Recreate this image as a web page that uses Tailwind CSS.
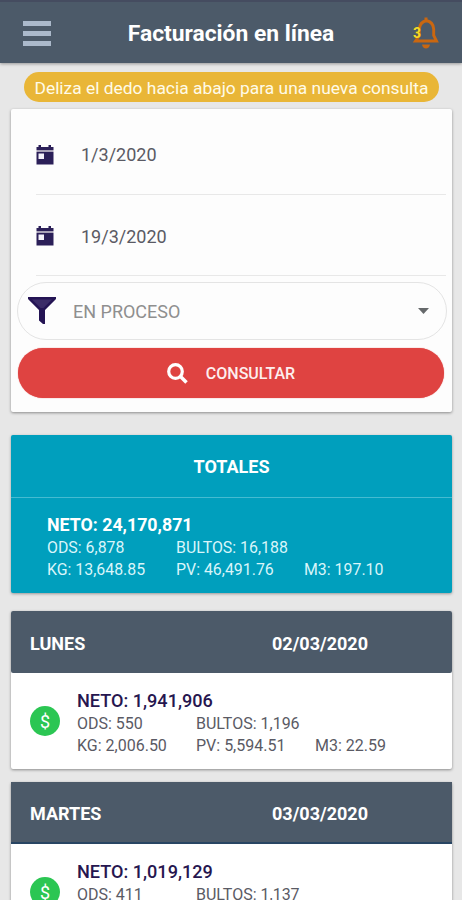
<!DOCTYPE html>
<html lang="es">
<head>
    <meta charset="UTF-8">
    <meta name="viewport" content="width=device-width, initial-scale=1.0">
    <title>Facturación en línea</title>
    <script src="https://cdn.jsdelivr.net/npm/@tailwindcss/browser@4"></script>
</head>
<body class="bg-[#e7e7e7] h-[900px] overflow-hidden font-[Roboto,sans-serif] text-[#5a5a64]">
    <!-- Top bar -->
    <header class="relative h-[63px] bg-[#4c5a69] border-t-2 border-[#454c60] shadow-[0_1px_3px_rgba(0,0,0,0.35)] flex items-center justify-center">
        <button class="absolute left-[23px] top-[19px] flex flex-col gap-[5px]" aria-label="Menú">
            <span class="block w-[28px] h-[5px] bg-[#abb9cb]"></span>
            <span class="block w-[28px] h-[5px] bg-[#abb9cb]"></span>
            <span class="block w-[28px] h-[5px] bg-[#abb9cb]"></span>
        </button>
        <h1 class="text-[22.8px] font-bold text-white pt-[3px]">Facturación en línea</h1>
        <div class="absolute left-[411px] top-[14px]">
            <svg class="block w-[30px] h-[34px]" viewBox="0 0 30 34" fill="none">
                <path d="M4.500 25H25.500L22.700 19.500V13C22.300 8.300 20 5.500 15.500 4.800C11 5.500 8.700 8.300 8.300 13V19.500z" stroke="#ca6710" stroke-width="2.900"/>
                <path d="M13.500 1.500h3v3.500h-3zM11 28.500h8c-.4 2.500-2 4-4 4s-3.600-1.500-4-4z" fill="#ca6710"/>
            </svg>
            <span class="absolute left-[2px] top-[8px] text-[14px] leading-[18px] font-bold text-[#f2dc27]">3</span>
        </div>
    </header>

    <main class="px-[11px] pt-[9px]">
        <p class="h-[30px] ml-[13px] w-[415px] rounded-full bg-[#e9b637] text-[#fffbe8] text-[17.4px] leading-[33px] text-center whitespace-nowrap">Deliza el dedo hacia abajo para una nueva consulta</p>

        <!-- Query form -->
        <section class="mt-[7px] h-[303px] w-[441px] bg-[#fdfdfd] rounded-[2px] shadow-[0_1px_3px_rgba(0,0,0,0.4)] px-[6px]">
            <div class="ml-[19px] h-[86px] border-b border-[#e8e8e8] flex items-center pt-[6px]">
                <svg class="w-[18px] h-[20px]" viewBox="0 0 18 20">
                    <path d="M2.500 0h2.500v2h7.500V0H15v2h2.500v3H.5V2h2z" fill="#2b1f58"/>
                    <path d="M.5 5h17v2H.5z" fill="#a9a2b8"/>
                    <path d="M.5 7h17v12.500H.5z" fill="#2b1f58"/>
                    <path d="M2.500 8.500h5.500v5.500H2.500z" fill="#f4f2fa"/>
                </svg>
                <span class="ml-[27px] text-[18px]">1/3/2020</span>
            </div>
            <div class="ml-[19px] h-[81px] border-b border-[#e8e8e8] flex items-center pt-[2px]">
                <svg class="w-[18px] h-[20px]" viewBox="0 0 18 20">
                    <path d="M2.500 0h2.500v2h7.500V0H15v2h2.500v3H.5V2h2z" fill="#2b1f58"/>
                    <path d="M.5 5h17v2H.5z" fill="#a9a2b8"/>
                    <path d="M.5 7h17v12.500H.5z" fill="#2b1f58"/>
                    <path d="M2.500 8.500h5.500v5.500H2.500z" fill="#f4f2fa"/>
                </svg>
                <span class="ml-[27px] text-[18px]">19/3/2020</span>
            </div>
            <div class="mt-[6px] h-[58px] w-[430px] rounded-full border border-[#e4e4e4] flex items-center pl-[10px] pr-[17px]">
                <svg class="w-[28px] h-[28px]" viewBox="0 0 28 28">
                    <path d="M0 0h28v2L17 13v14h-2l-4-3.500V13L0 2z" fill="#241454"/>
                    <path d="M4 2.500h20l-8.500 8.500h-3z" fill="#3b2c68"/>
                </svg>
                <span class="ml-[17px] flex-1 text-[18px] text-[#8f8f8f]">EN PROCESO</span>
                <svg class="w-[11px] h-[6px]" viewBox="0 0 11 6"><path d="M0 0h11L5.500 6z" fill="#66696b"/></svg>
            </div>
            <button class="mt-[8px] ml-px h-[50px] w-[426px] rounded-full bg-[#df4341] shadow-[0_0_1px_#df4341] text-[#fdeeee] flex items-center justify-center">
                <svg class="w-[21px] h-[21px]" viewBox="0 0 21 21" fill="none" stroke="#fff">
                    <circle cx="8.500" cy="8.500" r="6.800" stroke-width="3.200"/>
                    <path d="M13.500 13.500l6 6" stroke-width="3.600"/>
                </svg>
                <span class="ml-[18px] pt-[2px] text-[16px] font-medium">CONSULTAR</span>
            </button>
        </section>

        <!-- Totals -->
        <section class="mt-[23px] h-[158px] w-[441px] bg-[#009fbd] text-[#d9f5fa] rounded-[2px] shadow-[0_1px_3px_rgba(0,0,0,0.35)]">
            <h2 class="h-[63px] border-b border-[#45bbd1] flex items-center justify-center pt-px text-[18px] font-bold text-white">TOTALES</h2>
            <div class="pl-[36px] pt-[15px] text-[15.9px] leading-[22px] whitespace-nowrap">
                <p class="text-[17.8px] leading-[24px] font-bold text-white">NETO: 24,170,871</p>
                <div class="grid grid-cols-[129px_128px_1fr]">
                    <span>ODS: 6,878</span><span class="col-span-2">BULTOS: 16,188</span>
                    <span>KG: 13,648.85</span><span>PV: 46,491.76</span><span>M3: 197.10</span>
                </div>
            </div>
        </section>

        <!-- Days -->
        <section class="mt-[18px] h-[158px] w-[441px] bg-white rounded-[2px] shadow-[0_1px_3px_rgba(0,0,0,0.4)]">
            <h2 class="h-[62px] bg-[#4c5a69] rounded-[2px] flex items-center pt-[2px] pl-[19px] text-[18px] font-bold text-white">
                <span class="w-[242px]">LUNES</span><span>02/03/2020</span>
            </h2>
            <div class="flex pl-[19px] pt-[16px]">
                <span class="mt-[17px] size-[30px] rounded-full bg-[#2bc653] text-white text-[18px] leading-[31px] text-center">$</span>
                <div class="ml-[17px] text-[16px] leading-[22px] whitespace-nowrap">
                    <p class="text-[18.1px] leading-[24px] font-medium text-[#26164f]">NETO: 1,941,906</p>
                    <div class="grid grid-cols-[119px_119px_1fr]">
                        <span>ODS: 550</span><span class="col-span-2">BULTOS: 1,196</span>
                        <span>KG: 2,006.50</span><span>PV: 5,594.51</span><span>M3: 22.59</span>
                    </div>
                </div>
            </div>
        </section>

        <section class="mt-[13px] h-[158px] w-[441px] bg-white rounded-[2px] shadow-[0_1px_3px_rgba(0,0,0,0.4)]">
            <h2 class="h-[62px] bg-[#4c5a69] border-b-2 border-[#284563] flex items-center pt-[3px] pl-[19px] text-[18px] font-bold text-white">
                <span class="w-[242px]">MARTES</span><span>03/03/2020</span>
            </h2>
            <div class="flex pl-[19px] pt-[16px]">
                <span class="mt-[17px] size-[30px] rounded-full bg-[#2bc653] text-white text-[18px] leading-[31px] text-center">$</span>
                <div class="ml-[17px] text-[16px] leading-[22px] whitespace-nowrap">
                    <p class="text-[18.1px] leading-[24px] font-medium text-[#26164f]">NETO: 1,019,129</p>
                    <div class="grid grid-cols-[119px_119px_1fr]">
                        <span>ODS: 411</span><span class="col-span-2">BULTOS: 1,137</span>
                    </div>
                </div>
            </div>
        </section>
    </main>
</body>
</html>
